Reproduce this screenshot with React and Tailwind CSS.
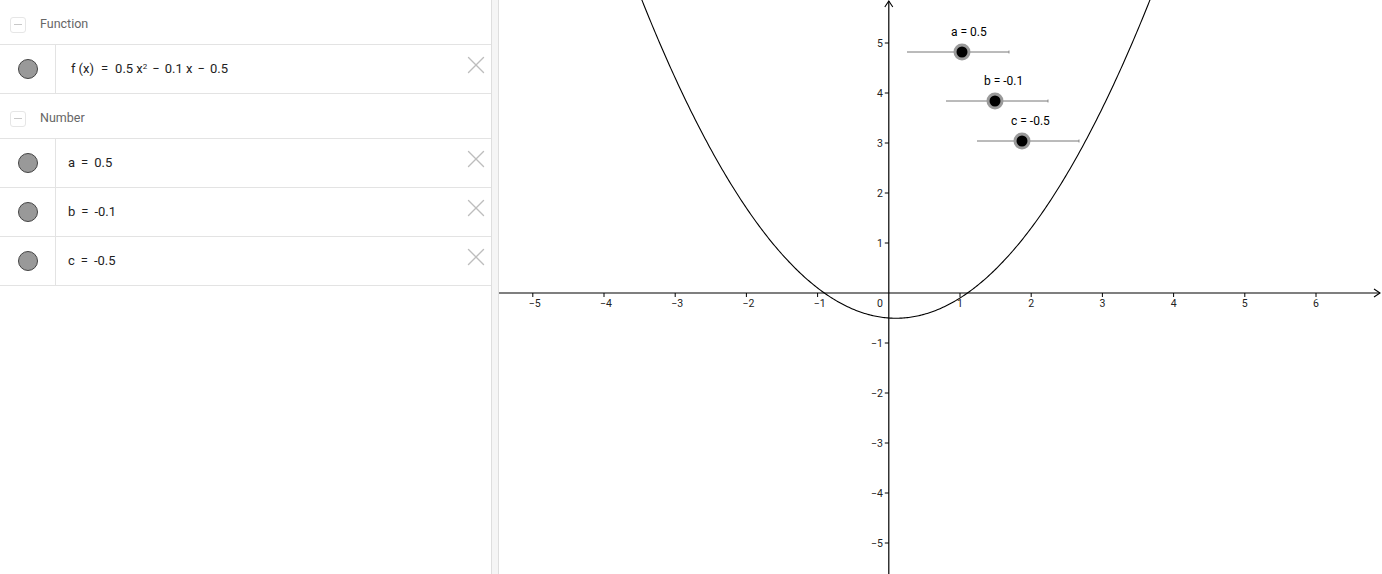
import { X } from "lucide-react";

const OX = 888.8;
const OY = 293;
const UX = 71.2;
const UY = 50;

const f = (x) => 0.5 * x * x - 0.1 * x - 0.5;

function parabolaPath() {
  const pts = [];
  for (let x = -4; x <= 4.2; x += 0.02) {
    pts.push(`${(OX + UX * x).toFixed(2)},${(OY - UY * f(x)).toFixed(2)}`);
  }
  return "M" + pts.join(" L");
}

const SLIDERS = [
  { label: "a = 0.5", x1: 907, x2: 1009, y: 52, px: 962 },
  { label: "b = -0.1", x1: 946, x2: 1048, y: 101, px: 995 },
  { label: "c = -0.5", x1: 977, x2: 1079, y: 141, px: 1022 },
];

function Header({ title }) {
  return (
    <div className="h-[45px] pt-[5px] flex items-center border-b border-[#e3e3e3]">
      <div className="w-[16px] h-[16px] ml-[10px] rounded-[3px] border border-[#e6e6e6] flex items-center justify-center">
        <div className="w-[8px] h-[1px] bg-[#c8c8c8]" />
      </div>
      <span className="ml-[14px] text-[12.5px] text-[#666]">{title}</span>
    </div>
  );
}

function Row({ children }) {
  return (
    <div className="h-[49px] flex items-stretch border-b border-[#e3e3e3]">
      <div className="w-[56px] shrink-0 flex items-center justify-center border-r border-[#e3e3e3]">
        <div className="w-[20px] h-[20px] rounded-full bg-[#999] border border-[#444]" />
      </div>
      <div className="flex-1 flex items-center pl-[12px] text-[13px] text-[#222]">{children}</div>
      <div className="w-[30px] flex items-center justify-start pb-[8px]">
        <X size={32} strokeWidth={1.1} className="text-[#bdbdbd]" />
      </div>
    </div>
  );
}

function Graph() {
  const xs = [-5, -4, -3, -2, -1, 1, 2, 3, 4, 5, 6];
  const ys = [5, 4, 3, 2, 1, -1, -2, -3, -4, -5];
  return (
    <svg viewBox="499 0 883 574" width="883" height="574" className="block" style={{ fontFamily: "Roboto, 'Liberation Sans', sans-serif" }}>
      <line x1="499" y1={OY} x2="1380" y2={OY} stroke="#000" strokeWidth="1.2" />
      <path d="M1374,289 L1380,293 L1374,297" fill="none" stroke="#000" strokeWidth="1.1" />
      <line x1={OX} y1="1" x2={OX} y2="574" stroke="#000" strokeWidth="1.2" />
      <path d={`M${OX - 4},7 L${OX},1 L${OX + 4},7`} fill="none" stroke="#000" strokeWidth="1.1" />
      {xs.map((v) => {
        const x = OX + UX * v;
        return (
          <g key={"x" + v}>
            <line x1={x} y1={OY} x2={x} y2={OY + 4} stroke="#000" strokeWidth="1" />
            <text x={v < 0 ? x + 2 : x} y={OY + 14} fontSize="10.5" textAnchor="middle" fill="#222">
              {v < 0 ? "\u2212" + -v : v}
            </text>
          </g>
        );
      })}
      {ys.map((v) => {
        const y = OY - UY * v;
        return (
          <g key={"y" + v}>
            <line x1={OX - 4} y1={y} x2={OX} y2={y} stroke="#000" strokeWidth="1" />
            <text x={OX - 6} y={y + 4} fontSize="10.5" textAnchor="end" fill="#222">
              {v < 0 ? "\u2212" + -v : v}
            </text>
          </g>
        );
      })}
      <text x={OX - 6} y={OY + 14} fontSize="10.5" textAnchor="end" fill="#222">0</text>
      <path d={parabolaPath()} fill="none" stroke="#000" strokeWidth="1.1" />
      {SLIDERS.map((s) => (
        <g key={s.label}>
          <line x1={s.x1} y1={s.y} x2={s.x2} y2={s.y} stroke="#777" strokeWidth="1" />
          <line x1={s.x2} y1={s.y - 1.5} x2={s.x2} y2={s.y + 1.5} stroke="#777" strokeWidth="0.8" />
          <circle cx={s.px} cy={s.y} r="8.5" fill="#9a9a9a" />
          <circle cx={s.px} cy={s.y} r="5.5" fill="#000" />
          <text x={s.px - 11} y={s.y - 16} fontSize="12" fill="#000">{s.label}</text>
        </g>
      ))}
    </svg>
  );
}

export default function App() {
  return (
    <div className="w-[1382px] h-[574px] flex bg-white overflow-hidden" style={{ fontFamily: "Roboto, 'Liberation Sans', sans-serif" }}>
      <div className="w-[491px] shrink-0 flex flex-col">
        <Header title="Function" />
        <Row>
          <span className="pl-[3px]">
            f<span className="ml-[3px]">(x)</span>
            <span className="mx-[7px]">=</span>0.5 x<sup className="text-[8px]">2</sup>
            <span className="mx-[5px]">−</span>0.1 x<span className="mx-[5px]">−</span>0.5
          </span>
        </Row>
        <Header title="Number" />
        <Row>a <span className="mx-[6px]">=</span> 0.5</Row>
        <Row>b <span className="mx-[6px]">=</span> -0.1</Row>
        <Row>c <span className="mx-[6px]">=</span> -0.5</Row>
      </div>
      <div className="w-[8px] shrink-0 bg-[#f5f5f5] border-x border-[#dedede]" />
      <div className="flex-1 relative">
        <Graph />
      </div>
    </div>
  );
}
